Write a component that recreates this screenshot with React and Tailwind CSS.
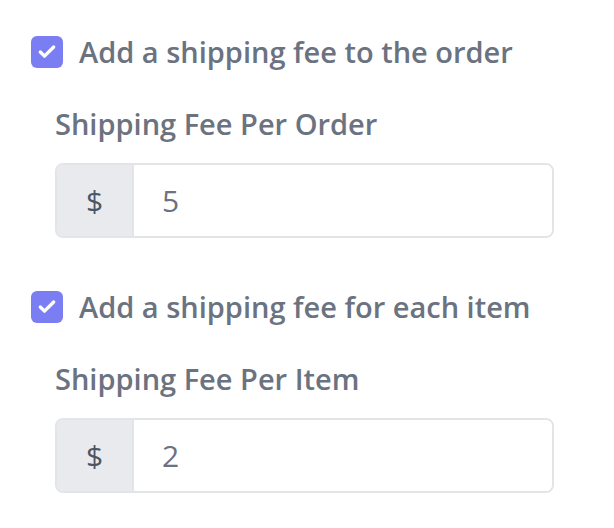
import { Check } from "lucide-react";

function Toggle({ label }) {
  return (
    <label className="flex items-center gap-4">
      <span className="flex h-8 w-8 shrink-0 items-center justify-center rounded-md bg-[#7b7ef2]">
        <Check className="h-5 w-5 text-white" strokeWidth={4} />
      </span>
      <span className="text-[29px] leading-8 font-semibold text-[#6b7280]">{label}</span>
    </label>
  );
}

function FeeInput({ label, value }) {
  return (
    <div className="mt-[38px] pl-6">
      <div className="text-[29px] leading-9 font-semibold text-[#6b7280]">{label}</div>
      <div className="mt-[21px] flex h-[75px] w-[499px] overflow-hidden rounded-lg border-2 border-[#e3e4e8]">
        <div className="flex w-[77px] items-center justify-center border-r-2 border-[#e3e4e8] bg-[#e9eaee] text-[30px] text-[#4b5563]">
          $
        </div>
        <div className="flex flex-1 items-center bg-white pl-7 text-[30px] text-[#6b7280]">
          {value}
        </div>
      </div>
    </div>
  );
}

export default function App() {
  return (
    <div className="min-h-screen bg-white pl-[31px] pt-[36px] font-['Open_Sans',sans-serif]">
      <Toggle label="Add a shipping fee to the order" />
      <FeeInput label="Shipping Fee Per Order" value="5" />
      <div className="mt-[53px]">
        <Toggle label="Add a shipping fee for each item" />
      </div>
      <FeeInput label="Shipping Fee Per Item" value="2" />
    </div>
  );
}
